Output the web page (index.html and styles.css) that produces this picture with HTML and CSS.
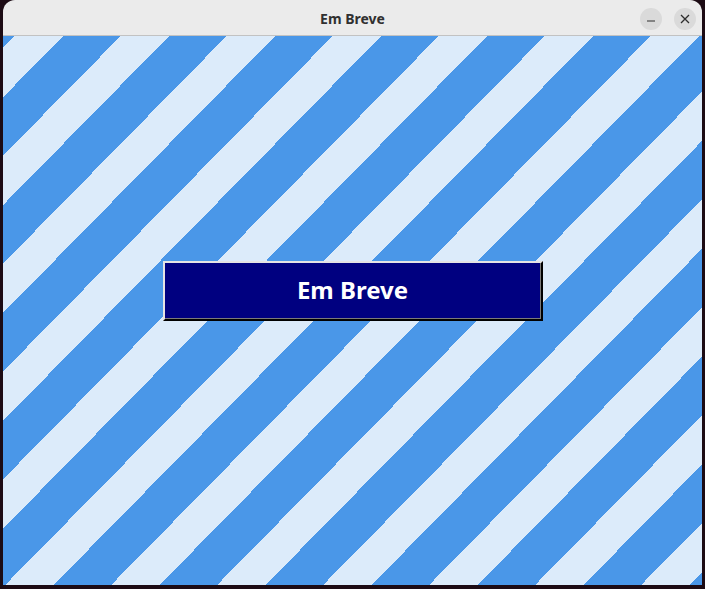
FILE: index.html
```html
<!DOCTYPE html>
<html lang="pt">
<head>
<meta charset="utf-8">
<title>Em Breve</title>
<link rel="stylesheet" href="styles.css">
</head>
<body>
<div class="desktop">
  <div class="window">
    <header class="titlebar">
      <div class="spacer"></div>
      <div class="title">Em Breve</div>
      <div class="controls">
        <button class="ctl" aria-label="Minimizar">
          <svg width="10" height="10" viewBox="0 0 10 10"><path d="M1 7H9" stroke="#2e2e2e" stroke-width="1.2"/></svg>
        </button>
        <button class="ctl" aria-label="Fechar">
          <svg width="10" height="10" viewBox="0 0 10 10"><path d="M1 1L9 9M9 1L1 9" stroke="#2e2e2e" stroke-width="1.3"/></svg>
        </button>
      </div>
    </header>
    <main class="canvas">
      <div class="banner">Em Breve</div>
    </main>
  </div>
</div>
</body>
</html>
```
FILE: styles.css
```css
html, body {
  margin: 0;
  padding: 0;
}
body {
  background: #1c0b14;
  width: 705px;
  height: 589px;
  overflow: hidden;
}
.desktop {
  padding-left: 3px;
}
.window {
  width: 699px;
  height: 585px;
  border-radius: 12px 12px 0 0;
  overflow: hidden;
  display: flex;
  flex-direction: column;
}
.titlebar {
  height: 35px;
  background: #ebebeb;
  border-bottom: 1px solid #c2c2c2;
  display: grid;
  grid-template-columns: 1fr auto 1fr;
  align-items: center;
  flex: none;
}
.title {
  font-family: "Noto Sans", "DejaVu Sans", sans-serif;
  font-weight: 700;
  font-size: 14px;
  color: #303030;
  padding-top: 1px;
}
.controls {
  display: flex;
  justify-content: flex-end;
  gap: 12px;
  padding-right: 6px;
  padding-top: 2px;
}
.ctl {
  width: 22px;
  height: 22px;
  border-radius: 50%;
  border: none;
  padding: 0;
  background: #dadada;
  display: flex;
  align-items: center;
  justify-content: center;
}
.canvas {
  flex: 1;
  background: repeating-linear-gradient(134.5deg,
    #4a97e8 0px, #4a97e8 8.3px,
    #dcebfa 8.3px, #dcebfa 42.9px,
    #4a97e8 42.9px, #4a97e8 75.6px);
  display: flex;
  justify-content: center;
  align-items: flex-start;
  padding-top: 225px;
}
.banner {
  width: 376px;
  height: 53px;
  background: #000080;
  border: 2px solid;
  border-color: #e4e4e4 #000 #000 #e4e4e4;
  box-shadow: inset -1px -1px 0 #7a7a7a;
  display: flex;
  align-items: center;
  justify-content: center;
  font-family: "Noto Sans", "Open Sans", sans-serif;
  font-weight: 700;
  font-size: 24px;
  color: #ffffff;
  padding-bottom: 3px;
  box-sizing: content-box;
}
```
